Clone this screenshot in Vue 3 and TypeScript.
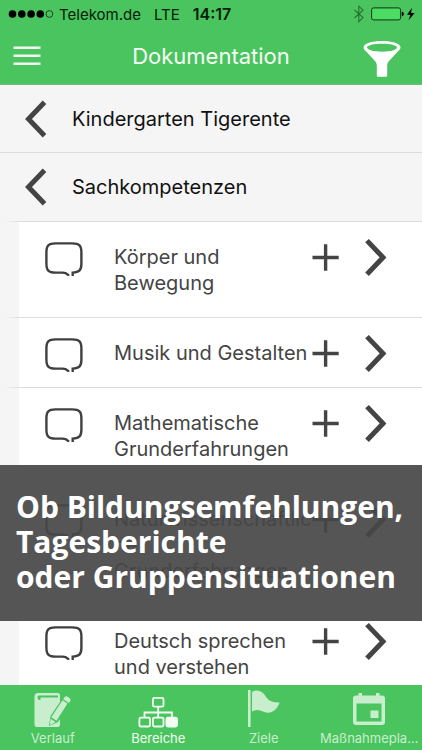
<script setup lang="ts">
import { ref } from 'vue'

interface Area {
  id: number
  lines: string[]
}

const breadcrumbs: string[] = ['Kindergarten Tigerente', 'Sachkompetenzen']

const areas: Area[] = [
  { id: 1, lines: ['Körper und', 'Bewegung'] },
  { id: 2, lines: ['Musik und Gestalten'] },
  { id: 3, lines: ['Mathematische', 'Grunderfahrungen'] },
  { id: 4, lines: ['Naturwissenschaftlic', 'he', 'Grunderfahrungen'] },
  { id: 5, lines: ['Deutsch sprechen', 'und verstehen'] },
]

const tabs: string[] = ['Verlauf', 'Bereiche', 'Ziele', 'Maßnahmepla...']
const activeTab = ref('Bereiche')
</script>

<template>
  <div class="app">
    <header class="header">
      <div class="status">
        <div class="carrier">
          <svg width="46" height="10" viewBox="0 0 46 10" aria-hidden="true">
            <circle cx="4.500" cy="5" r="3.8" />
            <circle cx="13.8" cy="5" r="3.8" />
            <circle cx="23.1" cy="5" r="3.8" />
            <circle cx="32.300" cy="5" r="3.8" />
            <circle cx="41.400" cy="5" r="3.4" fill="none" stroke="#0b2a10" stroke-width="0.8" />
          </svg>
          <span>Telekom.de</span>
          <span class="network">LTE</span>
        </div>
        <time class="clock">14:17</time>
        <div class="power">
          <svg width="12" height="18" viewBox="0 0 12 18" fill="none" stroke="#25732f" stroke-width="1.1" aria-hidden="true">
            <path d="M1.5 5 L10 12.6 L5.8 16.6 V1.2 L10 5.2 L1.5 13" />
          </svg>
          <svg width="46" height="14" viewBox="0 0 46 14" aria-hidden="true">
            <rect x="1.6" y="0.9" width="29" height="12" rx="2" fill="#4cdb63" stroke="#0d3514" stroke-width="1" />
            <path d="M31.8 4.6 q2 0.4 2 2.4 t-2 2.4z" />
            <path d="M42 0.8 L37 7.8 H40.4 L38.6 13.2 L44.6 5.9 H41z" />
          </svg>
        </div>
      </div>
      <div class="toolbar">
        <button class="icon-button" type="button" aria-label="Menü">
          <svg width="28" height="20" viewBox="0 0 28 20" stroke="#f4fff4" stroke-width="2.6" aria-hidden="true">
            <path d="M0.5 1.8H27.5M0.5 9.8H27.5M0.5 17.8H27.5" />
          </svg>
        </button>
        <h1 class="title">Dokumentation</h1>
        <button class="icon-button filter" type="button" aria-label="Filter">
          <svg width="38" height="38" viewBox="0 0 38 38" aria-hidden="true">
            <path
              fill="#fff" fill-rule="evenodd"
              d="M0.5 7.2C0.5 3.6 8.6 1 19 1s18.500 2.600 18.500 6.200c0 2-1.700 3.400-3.400 5L25.600 21.600c-1 1.400-1.400 2.600-1.400 4.400v9.200c0 1-0.400 1.500-1.400 1.500h-7.600c-1 0-1.400-0.500-1.400-1.500V26c0-1.800-0.400-3-1.400-4.400L3.900 12.200C2.200 10.600 0.500 9.200 0.500 7.200zM4 7.500c0 2.200 6.500 4.200 15 4.200s15-2 15-4.200S27.500 3.700 19 3.700 4 5.300 4 7.500z"
            />
          </svg>
        </button>
      </div>
    </header>

    <main class="content">
      <nav class="crumbs" aria-label="Pfad">
        <button v-for="crumb in breadcrumbs" :key="crumb" class="crumb" type="button">
          <svg class="arrow" width="22" height="38" viewBox="0 0 22 38" aria-hidden="true">
            <path d="M19.500 2.200L3.500 19L19.500 35.800" />
          </svg>
          <span>{{ crumb }}</span>
        </button>
      </nav>

      <ul class="areas">
        <li v-for="area in areas" :key="area.id" class="area">
          <button class="icon-button" type="button" aria-label="Notiz">
            <svg width="38" height="38" viewBox="0 0 38 38" fill="none" stroke="#404040" stroke-width="2.400" aria-hidden="true">
              <path d="M27.700 38V34.600C34.500 34.300 36.400 32 36.400 26V14.500C36.400 7.500 34.300 5.400 27.300 5.400H10.500C3.500 5.400 1.400 7.500 1.400 14.500V25.500C1.400 32.500 3.500 34.600 10.500 34.600H17.500C21 34.600 22 35.500 24 37.700" />
            </svg>
          </button>
          <p class="name">
            <span v-for="line in area.lines" :key="line">{{ line }}</span>
          </p>
          <button class="icon-button" type="button" aria-label="Hinzufügen">
            <svg width="28" height="28" viewBox="0 0 28 28" stroke="#444" stroke-width="3.400" aria-hidden="true">
              <path d="M0.500 14.500H26.700M13.600 1.300V27.700" />
            </svg>
          </button>
          <button class="icon-button" type="button" aria-label="Öffnen">
            <svg class="arrow" width="22" height="38" viewBox="0 0 22 38" aria-hidden="true">
              <path d="M2 2.600L18 19.400L2 36.200" />
            </svg>
          </button>
        </li>
      </ul>
    </main>

    <p class="caption">Ob Bildungsemfehlungen,<br>Tagesberichte<br>oder Gruppensituationen</p>

    <nav class="tabs" aria-label="Hauptnavigation">
      <button
        v-for="tab in tabs" :key="tab" type="button" class="tab"
        :class="{ active: tab === activeTab }" @click="activeTab = tab"
      >
        <svg v-if="tab === 'Verlauf'" width="40" height="40" viewBox="0 0 40 40" fill="currentColor" aria-hidden="true">
          <path fill-rule="evenodd" d="M5 3H24.500Q27 3 27 5V9.500L26 10H7.500V7.500H25V5.500H6Q4.500 5.500 4.500 7.200T6 10H27V12L17.500 26L16 36L25 32L27 29V34.500Q27 37 24.500 37H4Q1.500 37 1.500 34.500V6.500Q1.500 3 5 3z" />
          <path d="M29.500 10.200L34.500 13.600L23.500 30.700L18.300 27.200zM31 7.900Q32.300 5.300 34.700 6.700L36.800 8.200Q38.500 9.500 37 11.500L36 13L30.200 9.200zM17.500 28.700L22.500 32L17 35.300z" />
        </svg>
        <svg v-else-if="tab === 'Bereiche'" width="40" height="40" viewBox="0 0 40 40" fill="none" stroke="currentColor" stroke-width="1.800" aria-hidden="true">
          <rect x="14.900" y="7.900" width="10.600" height="8.800" rx="1.500" />
          <path d="M20.200 17V27.500M6.500 27.500V22.500H34V27.500" />
          <rect x="1.400" y="27.700" width="10.600" height="8.800" rx="1.500" />
          <rect x="14.900" y="27.700" width="10.600" height="8.800" rx="1.500" />
          <rect x="28.400" y="27.700" width="10.600" height="8.800" rx="1.500" fill="currentColor" />
        </svg>
        <svg v-else-if="tab === 'Ziele'" width="40" height="40" viewBox="0 0 40 40" fill="currentColor" aria-hidden="true">
          <path d="M4 0h2.600v37H4zM8 2C11 -0.200 16 0 19.500 3.500C23.500 8 23.500 12.500 35.700 12.600C33.500 18.500 29 23 24 22.700C18 22.500 15.500 17.500 8 21.500z" />
        </svg>
        <svg v-else width="40" height="40" viewBox="0 0 40 40" fill="currentColor" aria-hidden="true">
          <path fill-rule="evenodd" d="M9.500 3H13V5.500H27V3H30.500V5.500H33Q36 5.500 36 8.500V32Q36 35 33 35H7Q4 35 4 32V8.500Q4 5.500 7 5.500H9.500zM7.500 13.500V31.500H32.500V13.500z" />
          <path d="M21.500 20.500H29.500V28H21.500z" />
        </svg>
        <span>{{ tab }}</span>
      </button>
    </nav>
  </div>
</template>

<style>
body {
  margin: 0;
}
</style>

<style scoped>
.app {
  position: relative;
  display: flex;
  flex-direction: column;
  height: 100vh;
  background: #fff;
  font-family: Inter, "Liberation Sans", sans-serif;
}

button {
  padding: 0;
  border: 0;
  background: none;
  color: inherit;
  font: inherit;
  cursor: pointer;
}

svg {
  display: block;
  flex: none;
}

.header {
  flex: none;
  background: #4ac45e;
  border-bottom: 1px solid #74b97f;
}

.status {
  display: grid;
  grid-template-columns: 1fr auto 1fr;
  align-items: center;
  height: 28px;
  padding: 0 6px 0 8px;
  color: #06200a;
  font-size: 16px;
}

.carrier {
  display: flex;
  align-items: center;
  gap: 5px;
  font-size: 15px;
  white-space: nowrap;
}

.network {
  margin-left: 8px;
}

.clock {
  font-weight: 600;
}

.power {
  display: flex;
  align-items: center;
  justify-content: flex-end;
  gap: 5px;
}

.toolbar {
  display: grid;
  grid-template-columns: 1fr auto 1fr;
  align-items: center;
  height: 56px;
  padding: 0 13px;
}

.title {
  margin: 0;
  color: #f6fff6;
  font-size: 22px;
  font-weight: 400;
}

.icon-button {
  display: flex;
  align-items: center;
}

.filter {
  justify-self: end;
  padding: 6px 8px 0 0;
}

.content {
  flex: 1;
  min-height: 0;
  overflow: hidden;
}

.crumbs {
  background: #f5f5f5;
}

.crumb {
  display: flex;
  align-items: center;
  gap: 25px;
  box-sizing: border-box;
  width: 100%;
  height: 68px;
  padding-left: 25px;
  border-bottom: 1px solid #dcdcdc;
  color: #111;
  font-size: 20px;
}

.crumb:last-child {
  border-bottom: 0;
}

.arrow {
  fill: none;
  stroke: #444;
  stroke-width: 5;
}

.areas {
  --line: linear-gradient(90deg, #f5f5f5 4px, #dcdcdc 20px);
  margin: 0;
  padding: 1px 0 0;
  list-style: none;
  background: var(--line) top / 100% 1px no-repeat, linear-gradient(90deg, #f5f5f5 19px, #fff 19px);
}

.area {
  display: grid;
  grid-template-columns: 38px minmax(0, 1fr) 28px 22px;
  column-gap: 25px;
  align-items: start;
  padding: 22px 35px 22px 45px;
  background: var(--line) bottom / 100% 1px no-repeat;
}

.area .icon-button {
  height: 26px;
}

.name {
  display: flex;
  flex-direction: column;
  margin: 0 -25px 0 6px;
  color: #444;
  font-size: 20px;
  line-height: 26px;
  white-space: nowrap;
}

.caption {
  position: absolute;
  right: 0;
  bottom: 129px;
  left: 0;
  margin: 0;
  padding: 24px 0 27px 16px;
  background: rgba(70, 70, 70, 0.92);
  color: #fff;
  font-family: "Open Sans", sans-serif;
  font-size: 30px;
  font-weight: 700;
  line-height: 35px;
}

.tabs {
  display: grid;
  flex: none;
  grid-template-columns: repeat(4, 1fr);
  height: 65px;
  background: #4ac45e;
}

.tab {
  display: flex;
  flex-direction: column;
  align-items: center;
  padding-top: 5px;
  color: #c8eecd;
  font-size: 13px;
  line-height: 16px;
}

.tab.active {
  color: #f4fff4;
}
</style>
